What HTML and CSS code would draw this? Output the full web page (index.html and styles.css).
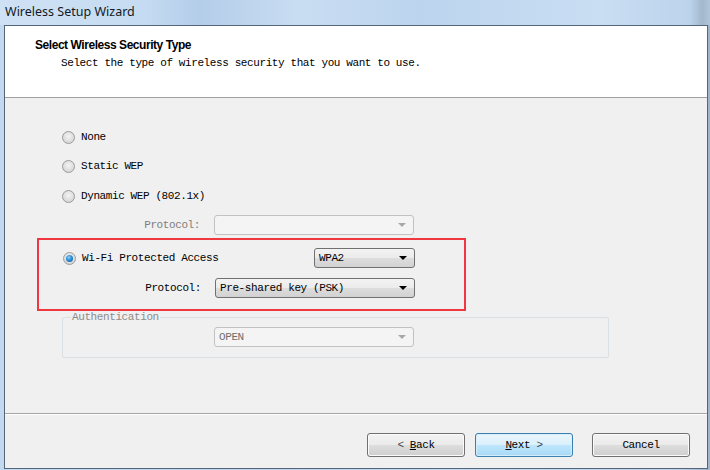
FILE: index.html
```html
<!DOCTYPE html>
<html>
<head>
<meta charset="utf-8">
<link rel="stylesheet" href="styles.css">
</head>
<body>
<div class="window">
  <div class="titlebar">Wireless Setup Wizard</div>
  <div class="client">
    <div class="header">
      <div class="h-title">Select Wireless Security Type</div>
      <div class="h-sub">Select the type of wireless security that you want to use.</div>
    </div>
    <div class="body">
      <div class="options">
        <div class="row opt"><span class="radio"></span><span class="lbl">None</span></div>
        <div class="row opt r2"><span class="radio"></span><span class="lbl">Static WEP</span></div>
        <div class="row opt r3"><span class="radio"></span><span class="lbl">Dynamic WEP (802.1x)</span></div>
        <div class="row sub r4">
          <span class="plabel dis">Protocol:</span>
          <span class="combo disabled wide"><span class="ctext"></span><span class="arrow"></span></span>
        </div>
        <div class="redbox">
          <div class="row opt">
            <span class="optwrap"><span class="radio on"></span><span class="lbl">Wi-Fi Protected Access</span></span>
            <span class="combo narrow"><span class="ctext">WPA2</span><span class="arrow"></span></span>
          </div>
          <div class="row sub r5">
            <span class="plabel">Protocol:</span>
            <span class="combo wide"><span class="ctext">Pre-shared key (PSK)</span><span class="arrow"></span></span>
          </div>
        </div>
        <div class="group">
          <span class="legend">Authentication</span>
          <span class="combo disabled wide"><span class="ctext">OPEN</span><span class="arrow"></span></span>
        </div>
      </div>
    </div>
    <div class="footer">
      <button class="btn"><span class="lt">&lt;</span> <u>B</u>ack</button>
      <button class="btn default"><u>N</u>ext <span class="lt">&gt;</span></button>
      <button class="btn cancel">Cancel</button>
    </div>
  </div>
</div>
</body>
</html>
```

FILE: styles.css
```css
html, body {
  margin: 0;
  padding: 0;
}
body {
  width: 710px;
  height: 470px;
  overflow: hidden;
  background: #b7cfe8;
  font-family: "Liberation Mono", "DejaVu Sans Mono", monospace;
  font-size: 11px;
  letter-spacing: -0.4px;
  color: #000;
}
.window {
  display: flex;
  flex-direction: column;
  width: 710px;
  height: 470px;
  background: linear-gradient(90deg, #c3d9f0 0%, #bcd3ec 40%, #c6dbf1 70%, #b9d1ec 96%, #9fb4ca 100%);
}
.titlebar {
  height: 25px;
  box-sizing: border-box;
  padding: 3px 0 0 5px;
  font-family: "Noto Sans", "Open Sans", sans-serif;
  font-size: 12.5px;
  letter-spacing: 0;
  color: #111a26;
  background: linear-gradient(90deg, #cfe1f4 0px, #c6dcf2 140px, #b4cde9 200px, #c9ddf2 300px, #bcd4ee 420px, #c9def3 600px, #bcd3ec 690px, #a3b8cd 702px, #b0c5da 710px);
}
.client {
  margin: 0 2px 0 4px;
  border: 1px solid #56667a;
  display: flex;
  flex-direction: column;
  background: #f0f0f0;
}
.header {
  height: 71px;
  background: #ffffff;
  border-bottom: 1px solid #a0a0a0;
  padding-left: 30px;
}
.h-title {
  margin-top: 12px;
  font-family: "Liberation Sans", Arial, sans-serif;
  font-weight: bold;
  font-size: 12px;
  letter-spacing: -0.45px;
  color: #000;
  line-height: 14px;
}
.h-sub {
  margin-top: 4px;
  padding-left: 26px;
  line-height: 14px;
}
.body {
  height: 315px;
  border-bottom: 1px solid #a6a6a6;
}
.options {
  padding: 29px 0 0 57px;
  display: flex;
  flex-direction: column;
}
.row {
  height: 20px;
  display: flex;
  align-items: center;
}
.r2 { margin-top: 9px; }
.r3 { margin-top: 10px; }
.r4 { margin-top: 9px; }
.r5 { margin-top: 10px; }
.optwrap {
  display: flex;
  align-items: center;
  width: 251px;
}
.radio {
  width: 11px;
  height: 11px;
  border-radius: 50%;
  border: 1px solid #9a9b9c;
  background: radial-gradient(circle at 50% 40%, #f4f4f4 0%, #dcdcdc 60%, #cfcfcf 100%);
  margin-right: 6px;
  flex: none;
  position: relative;
}
.radio.on::after {
  content: "";
  position: absolute;
  left: 2px;
  top: 2px;
  width: 7px;
  height: 7px;
  border-radius: 50%;
  background: radial-gradient(circle at 40% 35%, #8fd0f8 0%, #2a8fd6 45%, #0c5a99 100%);
}
.lbl {
  white-space: pre;
}
.plabel {
  width: 138px;
  text-align: right;
  margin-right: 14px;
  white-space: pre;
}
.dis { color: #7d7d7d; }
.combo {
  height: 20px;
  box-sizing: border-box;
  border: 1px solid #707070;
  border-radius: 3px;
  background: linear-gradient(#f3f3f3 0%, #ebebeb 50%, #dddddd 51%, #d2d2d2 100%);
  display: flex;
  align-items: center;
  padding: 0 7px 0 4px;
}
.combo .ctext {
  flex: 1;
  white-space: pre;
  color: #000;
}
.combo .arrow {
  width: 0;
  height: 0;
  border-left: 4px solid transparent;
  border-right: 4px solid transparent;
  border-top: 4px solid #000;
}
.combo.wide { width: 200px; }
.combo.narrow { width: 101px; }
.combo.disabled {
  border-color: #c2c2c2;
  background: #f4f4f4;
}
.combo.disabled .ctext { color: #6f6f6f; }
.combo.disabled .arrow { border-top-color: #a8a8a8; }
.redbox {
  margin: 3px 0 0 -25px;
  width: 429px;
  box-sizing: border-box;
  border: 2px solid #f0363e;
  padding: 8px 0 11px 24px;
  display: flex;
  flex-direction: column;
}
.group {
  position: relative;
  margin-top: 6px;
  width: 547px;
  height: 41px;
  box-sizing: border-box;
  border: 1px solid #dadfe4;
  border-radius: 2px;
  padding: 9px 0 0 151px;
}
.legend {
  position: absolute;
  left: 8px;
  top: -7px;
  padding: 0 1px;
  background: #f0f0f0;
  color: #8c8c8c;
  line-height: 12px;
}
.footer {
  height: 54px;
  box-sizing: border-box;
  border-top: 1px solid #ffffff;
  display: flex;
  justify-content: flex-end;
  align-items: flex-start;
  padding: 18px 17px 0 0;
}
.btn {
  width: 98px;
  height: 24px;
  margin: 0 0 0 10px;
  border: 1px solid #707070;
  border-radius: 3px;
  background: linear-gradient(#f2f2f2 0%, #ebebeb 50%, #dddddd 51%, #cfcfcf 100%);
  box-shadow: inset 0 0 0 1px #fbfbfb;
  font-family: "Liberation Mono", "DejaVu Sans Mono", monospace;
  font-size: 11px;
  letter-spacing: -0.4px;
  color: #000;
  padding: 0;
}
.btn.default {
  border-color: #3c7fb1;
  background: linear-gradient(#eaf6fd 0%, #d9f0fc 50%, #bee6fd 51%, #a7d9f5 100%);
  box-shadow: inset 0 0 0 1px #d6eefb;
}
.btn.cancel { margin-left: 19px; }
.lt { color: #444; }
```
